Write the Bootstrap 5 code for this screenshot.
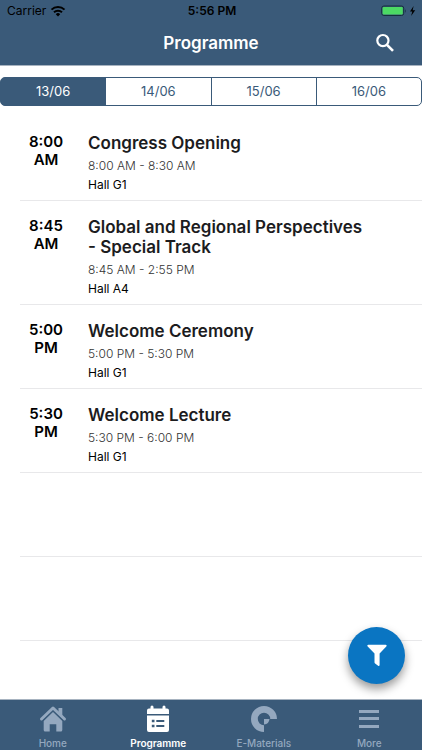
<!DOCTYPE html>
<html lang="en">
<head>
<meta charset="utf-8">
<meta name="viewport" content="width=device-width, initial-scale=1">
<title>Programme</title>
<link href="https://cdn.jsdelivr.net/npm/bootstrap@5.3.0/dist/css/bootstrap.min.css" rel="stylesheet">
<style>
:root { --brand: #3a5a79; --edge: #a7b3c0; }
body { font-family: Inter, "Liberation Sans", sans-serif; color: #000; background: #fff; }
svg { display: block; }
.app-top { background: var(--brand); border-bottom: 1px solid var(--edge); }
.status-row { height: 22px; font-size: 12px; line-height: 22px; padding: 0 5px 0 7px; }
.title-row { height: 43px; }
.title-row h1 { font-size: 17px; line-height: 43px; }
.search-btn { right: 26px; top: 11px; }
.day-group { padding-top: 11px; }
.day-group .btn { --bs-btn-color: var(--brand); --bs-btn-border-color: var(--brand); --bs-btn-active-bg: var(--brand); --bs-btn-active-border-color: var(--brand); --bs-btn-active-color: #fff; --bs-btn-border-radius: 5px; --bs-btn-padding-y: 0; --bs-btn-padding-x: 0; --bs-btn-font-size: 13px; --bs-btn-line-height: 27px; flex-basis: 0; }
.sessions { padding: 11px 0 0 20px; }
.session { border-bottom: 1px solid #e8e8ea; min-height: 84px; padding: 16px 56px 5px 0; }
.session-start { width: 52px; margin-right: 16px; font-size: 15px; line-height: 18px; font-weight: 600; text-align: center; }
.session h2 { font-size: 17px; line-height: 20px; font-weight: 600; color: #1c1c1e; margin: 0 0 3px; }
.session-time { font-size: 12px; line-height: 19px; font-weight: 300; color: #333; }
.session-hall { font-size: 12px; line-height: 20px; }
.filter-btn { right: 17px; bottom: 66px; width: 57px; height: 57px; background: #0a75c2; box-shadow: 0 5px 10px rgba(0,0,0,.4); z-index: 1040; }
.tab-bar { background: var(--brand); border-top: 1px solid var(--edge); height: 51px; }
.tab-bar .nav-link { color: #94a8bf; font-size: 10px; line-height: 14px; font-weight: 500; padding: 5px 0 0; }
.tab-bar .nav-link.active { color: #fff; font-weight: 600; }
.tab-bar svg { margin: 0 auto 3px; }
</style>
<script src="https://cdn.jsdelivr.net/npm/bootstrap@5.3.0/dist/js/bootstrap.bundle.min.js"></script>
</head>
<body>
<header class="app-top sticky-top">
  <div class="status-row row g-0">
    <div class="col d-flex align-items-center gap-1">
      <span>Carrier</span>
      <svg width="16" height="12" viewBox="0 0 16 12" aria-hidden="true"><g fill="none" stroke="#000" stroke-width="2"><path d="M1.5 4.6a9.2 9.2 0 0 1 13 0"/><path d="M4 7.3a5.7 5.7 0 0 1 8 0"/></g><path d="M8 11.5 5.8 9.2a3.1 3.1 0 0 1 4.4 0z"/></svg>
    </div>
    <div class="col-auto fw-semibold">5:56 PM</div>
    <div class="col d-flex align-items-center justify-content-end">
      <svg width="37" height="12" viewBox="0 0 37 12" aria-hidden="true"><rect x="1.7" y="1" width="22" height="9.5" rx="2.2" fill="none" stroke="#142f3c"/><rect x="2.6" y="2" width="20.2" height="7.5" rx="1" fill="#4cd964"/><path d="M25 4q1.500 2 0 4z" fill="#142f3c"/><path d="M33.6 1 30 6.5h2.300L31.100 11 35.200 5.200h-2.500z"/></svg>
    </div>
  </div>
  <div class="title-row position-relative text-center">
    <h1 class="m-0 fw-semibold text-white">Programme</h1>
    <button type="button" class="search-btn btn p-0 border-0 position-absolute" aria-label="Search">
      <svg width="21" height="21" viewBox="0 0 21 21" fill="none" stroke="#fff" stroke-width="2.2"><circle cx="7.9" cy="7.6" r="5.6"/><path d="m12 11.800 6 6" stroke-width="2.6"/></svg>
    </button>
  </div>
</header>
<main>
  <div class="day-group btn-group d-flex" role="group" aria-label="Day">
    <input type="radio" class="btn-check" name="day" id="d13" checked><label class="btn" for="d13">13/06</label>
    <input type="radio" class="btn-check" name="day" id="d14"><label class="btn" for="d14">14/06</label>
    <input type="radio" class="btn-check" name="day" id="d15"><label class="btn" for="d15">15/06</label>
    <input type="radio" class="btn-check" name="day" id="d16"><label class="btn" for="d16">16/06</label>
  </div>
  <ul class="sessions list-unstyled m-0">
    <li class="session d-flex"><div class="session-start flex-shrink-0">8:00<br>AM</div><div><h2>Congress Opening</h2><div class="session-time">8:00 AM - 8:30 AM</div><div class="session-hall">Hall G1</div></div></li>
    <li class="session d-flex"><div class="session-start flex-shrink-0">8:45<br>AM</div><div><h2>Global and Regional Perspectives - Special Track</h2><div class="session-time">8:45 AM - 2:55 PM</div><div class="session-hall">Hall A4</div></div></li>
    <li class="session d-flex"><div class="session-start flex-shrink-0">5:00<br>PM</div><div><h2>Welcome Ceremony</h2><div class="session-time">5:00 PM - 5:30 PM</div><div class="session-hall">Hall G1</div></div></li>
    <li class="session d-flex"><div class="session-start flex-shrink-0">5:30<br>PM</div><div><h2>Welcome Lecture</h2><div class="session-time">5:30 PM - 6:00 PM</div><div class="session-hall">Hall G1</div></div></li>
    <li class="session" aria-hidden="true"></li>
    <li class="session" aria-hidden="true"></li>
  </ul>
</main>
<button type="button" class="filter-btn btn rounded-circle border-0 p-0 position-fixed d-flex align-items-center justify-content-center" aria-label="Filter">
  <svg width="20" height="23" viewBox="0 0 20 23" fill="#fff"><path d="M1.300.7h17.400c1 0 1.200 1 .6 1.700L12.600 9.500V21c0 .9-.8 1.200-1.500.7l-3-2.200c-.4-.3-.6-.7-.6-1.200V9.500L.7 2.400C.1 1.700.3.7 1.300.7z"/></svg>
</button>
<nav class="tab-bar nav nav-justified fixed-bottom text-center flex-nowrap">
  <a class="nav-item nav-link" href="#home">
    <svg width="28" height="28" viewBox="0 0 28 28" fill="currentColor"><path d="M19.500 3h3.800v8l-3.800-3.500z"/><path d="M2.500 14 14 3 25.500 14" fill="none" stroke="currentColor" stroke-width="3" stroke-linecap="round" stroke-linejoin="round"/><path d="m14 7 9.300 9v9q0 1.500-1.500 1.500h-4.500v-7.300h-6.600v7.300H6.200q-1.500 0-1.500-1.500v-9z"/><path d="M3.500 16.200 14 6l10.500 10.200" fill="none" stroke="#3a5a79"/></svg>Home</a>
  <a class="nav-item nav-link active" aria-current="page" href="#programme">
    <svg width="28" height="28" viewBox="0 0 28 28" fill="currentColor"><path d="M3 9V5.500q0-2 2-2h1.500V2a1.500 1.500 0 0 1 3 0v1.500h9V2a1.500 1.500 0 0 1 3 0v1.500H23q2 0 2 2V9z"/><path fill-rule="evenodd" d="M3 10.500h22v14.500q0 2-2 2H5q-2 0-2-2zM7.800 14.700h2.700v2.600H7.800zM12.300 15h8v2h-8zM7.800 19.700h2.700v2.600H7.800zM12.300 20h8v2h-8z"/></svg>Programme</a>
  <a class="nav-item nav-link" href="#materials">
    <svg width="28" height="28" viewBox="0 0 28 28" fill="currentColor"><path d="M14 27A13 13 0 1 1 27 14h-6.800A6.200 6.200 0 1 0 14 20.200z"/><path d="M14 14h5.500q-.5 5-5.500 5.500z"/></svg>E-Materials</a>
  <a class="nav-item nav-link" href="#more">
    <svg width="28" height="28" viewBox="0 0 28 28" fill="currentColor"><path d="M4 5h20v3H4zM4 12h20v3H4zM4 20h20v3H4z"/></svg>More</a>
</nav>
</body>
</html>
